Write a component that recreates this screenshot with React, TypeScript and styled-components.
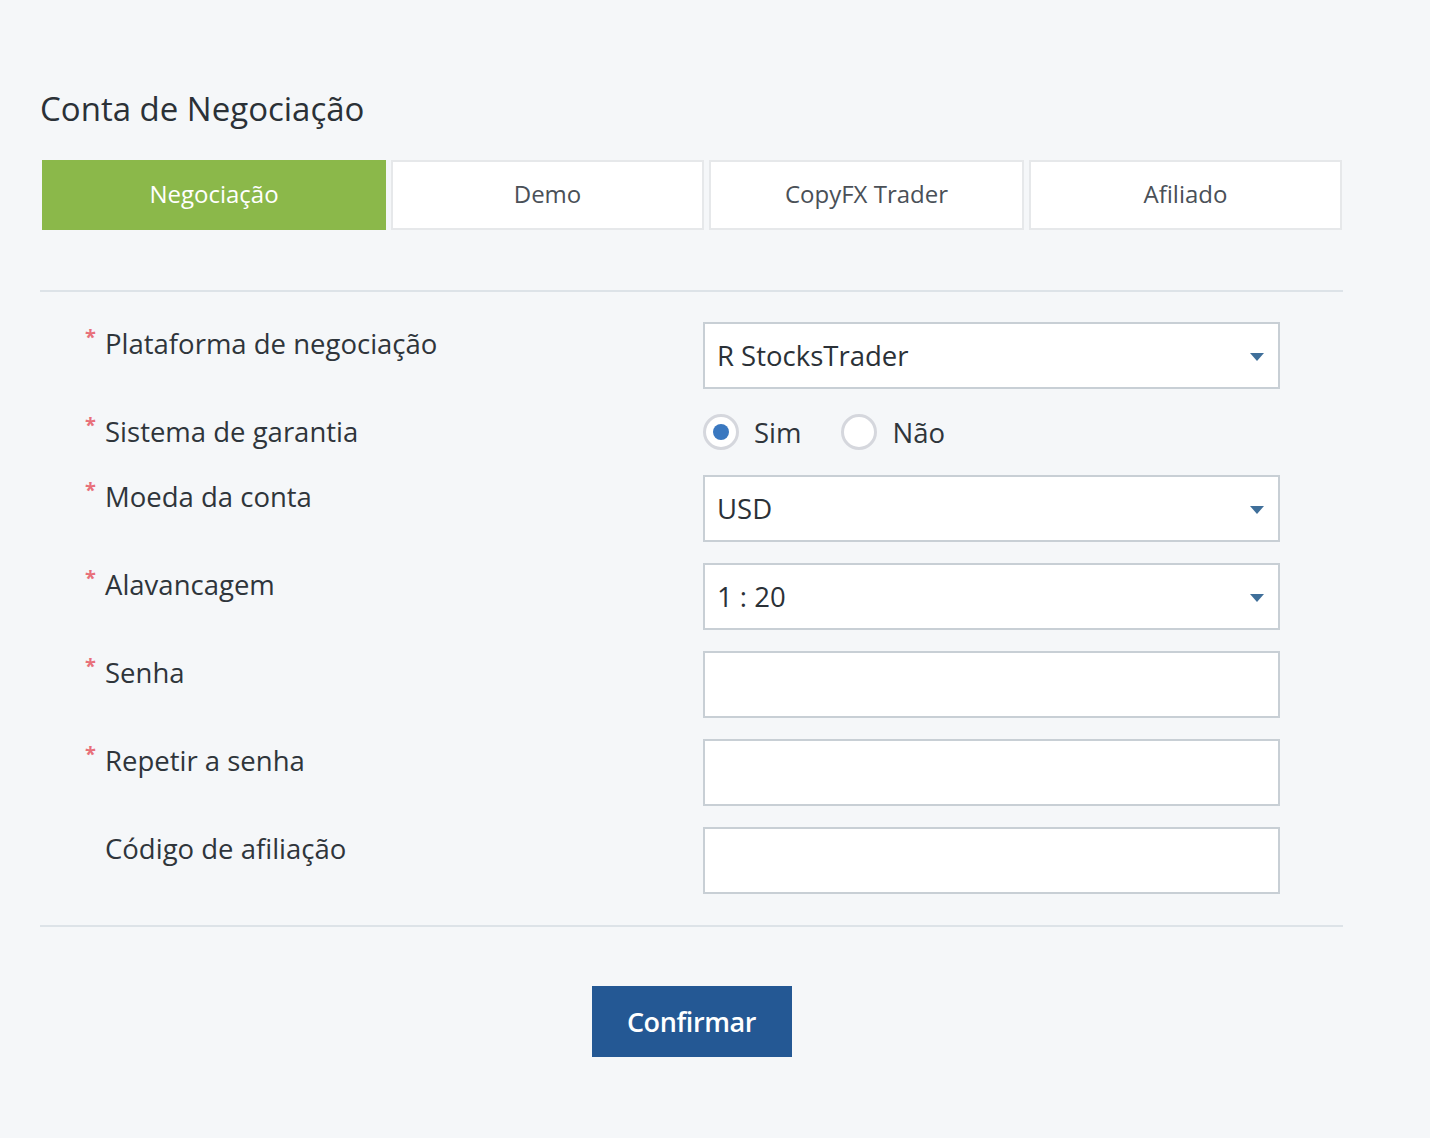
import React, { useState } from "react";
import styled, { createGlobalStyle } from "styled-components";

const GlobalStyle = createGlobalStyle`
  html, body {
    margin: 0;
    padding: 0;
    background: #f5f7f9;
    font-family: "Open Sans", "Noto Sans", sans-serif;
    color: #2f353b;
  }
`;

const Page = styled.div`
  min-height: 1138px;
  padding: 86px 0 0 40px;
  box-sizing: border-box;
`;

const Panel = styled.div`
  width: 1303px;
`;

const Title = styled.h1`
  margin: 0 0 28px 0;
  font-size: 33px;
  font-weight: 400;
  line-height: 46px;
  letter-spacing: 0;
  color: #2b3137;
`;

const Tabs = styled.div`
  display: grid;
  grid-template-columns: 344px 313px 315px 313px;
  gap: 5px;
  margin-left: 2px;
`;

const Tab = styled.button<{ $active?: boolean }>`
  height: 70px;
  box-sizing: border-box;
  border: 2px solid ${(p) => (p.$active ? "#8bb84a" : "#e6e8ea")};
  background: ${(p) => (p.$active ? "#8bb84a" : "#ffffff")};
  color: ${(p) => (p.$active ? "#ffffff" : "#4a5057")};
  font-family: inherit;
  font-size: 24px;
  cursor: pointer;
  padding: 0 0 4px 0;
`;

const Divider = styled.hr`
  margin: 0;
  border: none;
  height: 2px;
  background: #dde3e8;
`;

const TopDivider = styled(Divider)`
  margin-top: 60px;
`;

const Form = styled.div`
  display: grid;
  grid-template-columns: 618px 577px;
  row-gap: 21px;
  padding: 30px 0 31px 45px;
`;

const Label = styled.div`
  display: flex;
  align-items: flex-start;
  font-size: 27.5px;
  line-height: 44px;
  color: #2f353b;
`;

const Star = styled.span<{ $hidden?: boolean }>`
  width: 20px;
  color: #e8707a;
  font-size: 20px;
  font-weight: 700;
  line-height: 30px;
  visibility: ${(p) => (p.$hidden ? "hidden" : "visible")};
`;

const Field = styled.div`
  position: relative;
  height: 67px;
  box-sizing: border-box;
  border: 2px solid #c8cfd5;
  background: #ffffff;
  display: flex;
  align-items: center;
  padding: 0 12px;
  font-size: 27.5px;
  color: #2b3137;
`;

const TextInput = styled.input`
  height: 67px;
  box-sizing: border-box;
  border: 2px solid #c8cfd5;
  background: #ffffff;
  padding: 0 12px;
  font-family: inherit;
  font-size: 27px;
  outline: none;
  width: 100%;
`;

const Caret = styled.span`
  position: absolute;
  right: 14px;
  top: 50%;
  margin-top: -3px;
  width: 0;
  height: 0;
  border-left: 7px solid transparent;
  border-right: 7px solid transparent;
  border-top: 8px solid #3f6f9a;
`;

const RadioGroup = styled.div`
  display: flex;
  align-items: center;
  gap: 40px;
  height: 44px;
`;

const RadioOption = styled.label`
  display: flex;
  align-items: center;
  gap: 15px;
  font-size: 27.5px;
  color: #2f353b;
  cursor: pointer;
`;

const RadioCircle = styled.span<{ $checked?: boolean }>`
  width: 36px;
  height: 36px;
  box-sizing: border-box;
  border-radius: 50%;
  border: 3px solid #d5d7dd;
  background: #ffffff;
  display: flex;
  align-items: center;
  justify-content: center;
  &::after {
    content: "";
    width: 16px;
    height: 16px;
    border-radius: 50%;
    background: #3a78c0;
    display: ${(p) => (p.$checked ? "block" : "none")};
  }
`;

const Actions = styled.div`
  display: flex;
  justify-content: center;
  padding-top: 59px;
`;

const Submit = styled.button`
  width: 200px;
  height: 71px;
  border: none;
  background: #245894;
  color: #ffffff;
  font-family: inherit;
  font-size: 27px;
  font-weight: 600;
  letter-spacing: -0.4px;
  cursor: pointer;
`;

const tabs = ["Negociação", "Demo", "CopyFX Trader", "Afiliado"];

function Select({ value }: { value: string }) {
  return (
    <Field>
      {value}
      <Caret />
    </Field>
  );
}

function Row({ label, required = true, children }: { label: string; required?: boolean; children: React.ReactNode }) {
  return (
    <>
      <Label>
        <Star $hidden={!required}>*</Star>
        {label}
      </Label>
      <div>{children}</div>
    </>
  );
}

export default function App() {
  const [tab, setTab] = useState(0);
  const [guarantee, setGuarantee] = useState(true);

  return (
    <Page>
      <GlobalStyle />
      <Panel>
        <Title>Conta de Negociação</Title>
        <Tabs>
          {tabs.map((t, i) => (
            <Tab key={t} $active={tab === i} onClick={() => setTab(i)}>
              {t}
            </Tab>
          ))}
        </Tabs>
        <TopDivider />
        <Form>
          <Row label="Plataforma de negociação">
            <Select value="R StocksTrader" />
          </Row>
          <Row label="Sistema de garantia">
            <RadioGroup>
              <RadioOption onClick={() => setGuarantee(true)}>
                <RadioCircle $checked={guarantee} />
                Sim
              </RadioOption>
              <RadioOption onClick={() => setGuarantee(false)}>
                <RadioCircle $checked={!guarantee} />
                Não
              </RadioOption>
            </RadioGroup>
          </Row>
          <Row label="Moeda da conta">
            <Select value="USD" />
          </Row>
          <Row label="Alavancagem">
            <Select value="1 : 20" />
          </Row>
          <Row label="Senha">
            <TextInput type="password" />
          </Row>
          <Row label="Repetir a senha">
            <TextInput type="password" />
          </Row>
          <Row label="Código de afiliação" required={false}>
            <TextInput type="text" />
          </Row>
        </Form>
        <Divider />
        <Actions>
          <Submit>Confirmar</Submit>
        </Actions>
      </Panel>
    </Page>
  );
}
